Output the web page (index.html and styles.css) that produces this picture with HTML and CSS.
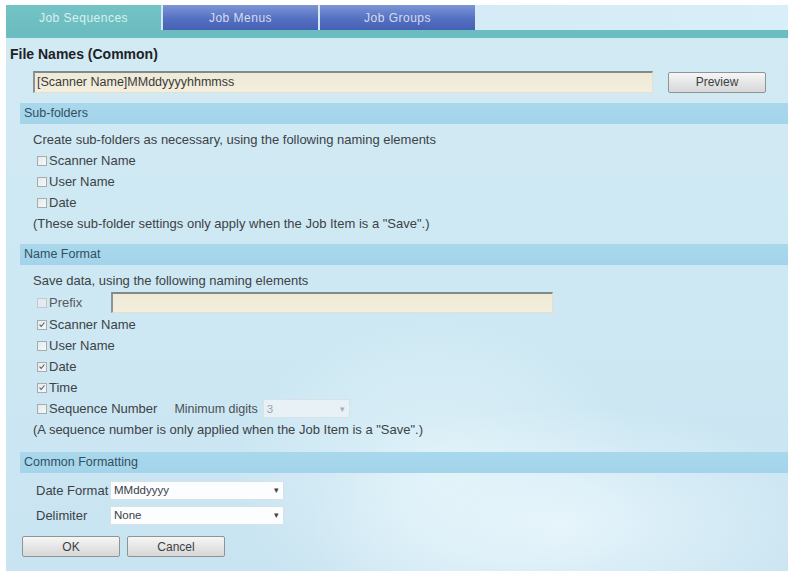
FILE: index.html
```html
<!DOCTYPE html>
<html lang="en">
<head>
    <meta charset="UTF-8">
    <title>File Names (Common)</title>
    <link rel="stylesheet" href="styles.css">
</head>
<body>
    <div class="panel">
        <div class="tabbar">
            <div class="tab active">Job Sequences</div>
            <div class="tab">Job Menus</div>
            <div class="tab">Job Groups</div>
        </div>

        <div class="content">
            <h1 class="title">File Names (Common)</h1>
            <div class="name-row">
                <div class="textbox name-box">[Scanner Name]MMddyyyyhhmmss</div>
                <button class="btn preview-btn">Preview</button>
            </div>

            <div class="section-bar sub-bar">Sub-folders</div>
            <div class="section sub-section">
                <div class="row">Create sub-folders as necessary, using the following naming elements</div>
                <div class="row"><span class="cb"></span>Scanner Name</div>
                <div class="row"><span class="cb"></span>User Name</div>
                <div class="row"><span class="cb"></span>Date</div>
                <div class="row">(These sub-folder settings only apply when the Job Item is a "Save".)</div>
            </div>

            <div class="section-bar">Name Format</div>
            <div class="section name-section">
                <div class="row">Save data, using the following naming elements</div>
                <div class="row prefix-row">
                    <span class="cb disabled"></span><span class="prefix-label">Prefix</span>
                    <div class="textbox prefix-box"></div>
                </div>
                <div class="row"><span class="cb checked"><svg viewBox="0 0 10 10"><path d="M2 5.2 L4 7.5 L8 2.5"/></svg></span>Scanner Name</div>
                <div class="row"><span class="cb"></span>User Name</div>
                <div class="row"><span class="cb checked"><svg viewBox="0 0 10 10"><path d="M2 5.2 L4 7.5 L8 2.5"/></svg></span>Date</div>
                <div class="row"><span class="cb checked"><svg viewBox="0 0 10 10"><path d="M2 5.2 L4 7.5 L8 2.5"/></svg></span>Time</div>
                <div class="row seq-row">
                    <span class="cb"></span><span class="seq-label">Sequence Number</span>
                    <span class="min-label">Minimum digits</span>
                    <div class="select disabled digits-select"><span>3</span><span class="arrow">▾</span></div>
                </div>
                <div class="row">(A sequence number is only applied when the Job Item is a "Save".)</div>
            </div>

            <div class="section-bar common-bar">Common Formatting</div>
            <div class="section common-section">
                <div class="row field-row">
                    <span class="field-label">Date Format</span>
                    <div class="select"><span>MMddyyyy</span><span class="arrow">▾</span></div>
                </div>
                <div class="row field-row">
                    <span class="field-label">Delimiter</span>
                    <div class="select"><span>None</span><span class="arrow">▾</span></div>
                </div>
            </div>

            <div class="actions">
                <button class="btn">OK</button>
                <button class="btn">Cancel</button>
            </div>
        </div>
    </div>
</body>
</html>
```

FILE: styles.css
```css
body {
    margin: 0;
    padding: 0;
    background-color: #fff;
    font-family: "Liberation Sans", Arial, sans-serif;
    font-size: 12px;
    color: #3c4246;
}
.panel {
    margin: 5px 5px 0 6px;
    height: 566px;
    background:
        radial-gradient(ellipse 260px 120px at 560px 520px, rgba(240, 250, 255, 0.7), transparent),
        radial-gradient(ellipse 200px 160px at 430px 470px, rgba(235, 248, 253, 0.6), transparent),
        linear-gradient(180deg, #d2eaf4 0%, #cde8f3 60%, #c9e4f1 100%);
}
.tabbar {
    display: flex;
    gap: 2px;
    height: 25px;
    background: linear-gradient(90deg, #cfe6f4, #d8eef8);
    border-bottom: 8px solid #6cbdc0;
}
.tab {
    width: 155px;
    height: 25px;
    display: flex;
    align-items: center;
    justify-content: center;
    color: #d6dcf0;
    font-size: 12px;
    letter-spacing: 0.5px;
    background: linear-gradient(180deg, #7d96d8 0%, #5470c0 55%, #4660b4 100%);
}
.tab.active {
    color: #d9f0f0;
    background: linear-gradient(180deg, #74c3c6 0%, #6cbdc0 100%);
}
.content {
    padding: 8px 0 0 0;
}
.title {
    margin: 0 0 9px 4px;
    height: 16px;
    line-height: 16px;
    font-size: 14px;
    font-weight: bold;
    color: #1e2226;
}
.name-row {
    display: flex;
    align-items: center;
    height: 22px;
    padding-left: 27px;
}
.textbox {
    box-sizing: border-box;
    height: 22px;
    background: linear-gradient(180deg, #efe9d6, #f3eedd);
    border-top: 2px solid #7f8a8c;
    border-left: 2px solid #8a9496;
    border-bottom: 1px solid #e4e0cf;
    border-right: 1px solid #e4e0cf;
    padding-left: 2px;
    line-height: 19px;
    font-size: 12.5px;
    color: #3a3a3a;
}
.name-box {
    width: 620px;
}
.btn {
    box-sizing: border-box;
    width: 98px;
    height: 21px;
    font-family: "Liberation Sans", Arial, sans-serif;
    font-size: 12px;
    color: #3b3f42;
    background: linear-gradient(180deg, #f6f6f6 0%, #e4e4e4 55%, #d8d8d8 100%);
    border: 1px solid #8e9496;
    border-radius: 2px;
    padding: 0;
}
.preview-btn {
    margin-left: 15px;
}
.section-bar {
    margin: 10px 0 0 14px;
    height: 21px;
    line-height: 21px;
    padding-left: 4px;
    background: linear-gradient(180deg, #a9d8ec, #a3d4ea);
    color: #33505f;
    font-size: 12.5px;
}
.sub-bar {
    margin-top: 10px;
}
.section {
    padding: 5px 0 0 27px;
    font-size: 13px;
}
.row {
    display: flex;
    align-items: center;
    height: 21px;
    white-space: nowrap;
}
.cb {
    box-sizing: border-box;
    display: inline-flex;
    align-items: center;
    justify-content: center;
    width: 10px;
    height: 10px;
    margin: 0 2px 0 4px;
    border: 1px solid #a4acb0;
    background: linear-gradient(135deg, #e6eaec, #f6f8f8);
}
.cb svg {
    width: 9px;
    height: 9px;
    fill: none;
    stroke: #505860;
    stroke-width: 1.3;
}
.cb.disabled {
    border-color: #c2c8cc;
    background: #e2ecf0;
}
.prefix-row {
    height: 23px;
}
.prefix-label {
    color: #555b60;
}
.prefix-box {
    margin-left: 29px;
    width: 442px;
    height: 21px;
}
.seq-label {
    margin-right: 17px;
}
.min-label {
    margin-right: 5px;
    color: #4a5055;
    font-size: 12.5px;
}
.select {
    box-sizing: border-box;
    display: flex;
    align-items: center;
    justify-content: space-between;
    width: 174px;
    height: 19px;
    padding: 0 4px 0 3px;
    background: #fbfdfe;
    border: 1px solid #d6e2e8;
    font-size: 11.5px;
    color: #3a4046;
}
.select .arrow {
    font-size: 9px;
    color: #444;
}
.select.disabled {
    width: 87px;
    background: #e8f2f6;
    color: #9aa4aa;
}
.select.disabled .arrow {
    color: #a6b0b6;
}
.common-bar {
    margin-top: 12px;
}
.common-section {
    padding-top: 7px;
}
.field-row {
    height: 20px;
    margin-bottom: 5px;
}
.field-label {
    width: 77px;
    padding-left: 3px;
    box-sizing: border-box;
}
.actions {
    display: flex;
    gap: 7px;
    padding: 6px 0 0 16px;
}
```
